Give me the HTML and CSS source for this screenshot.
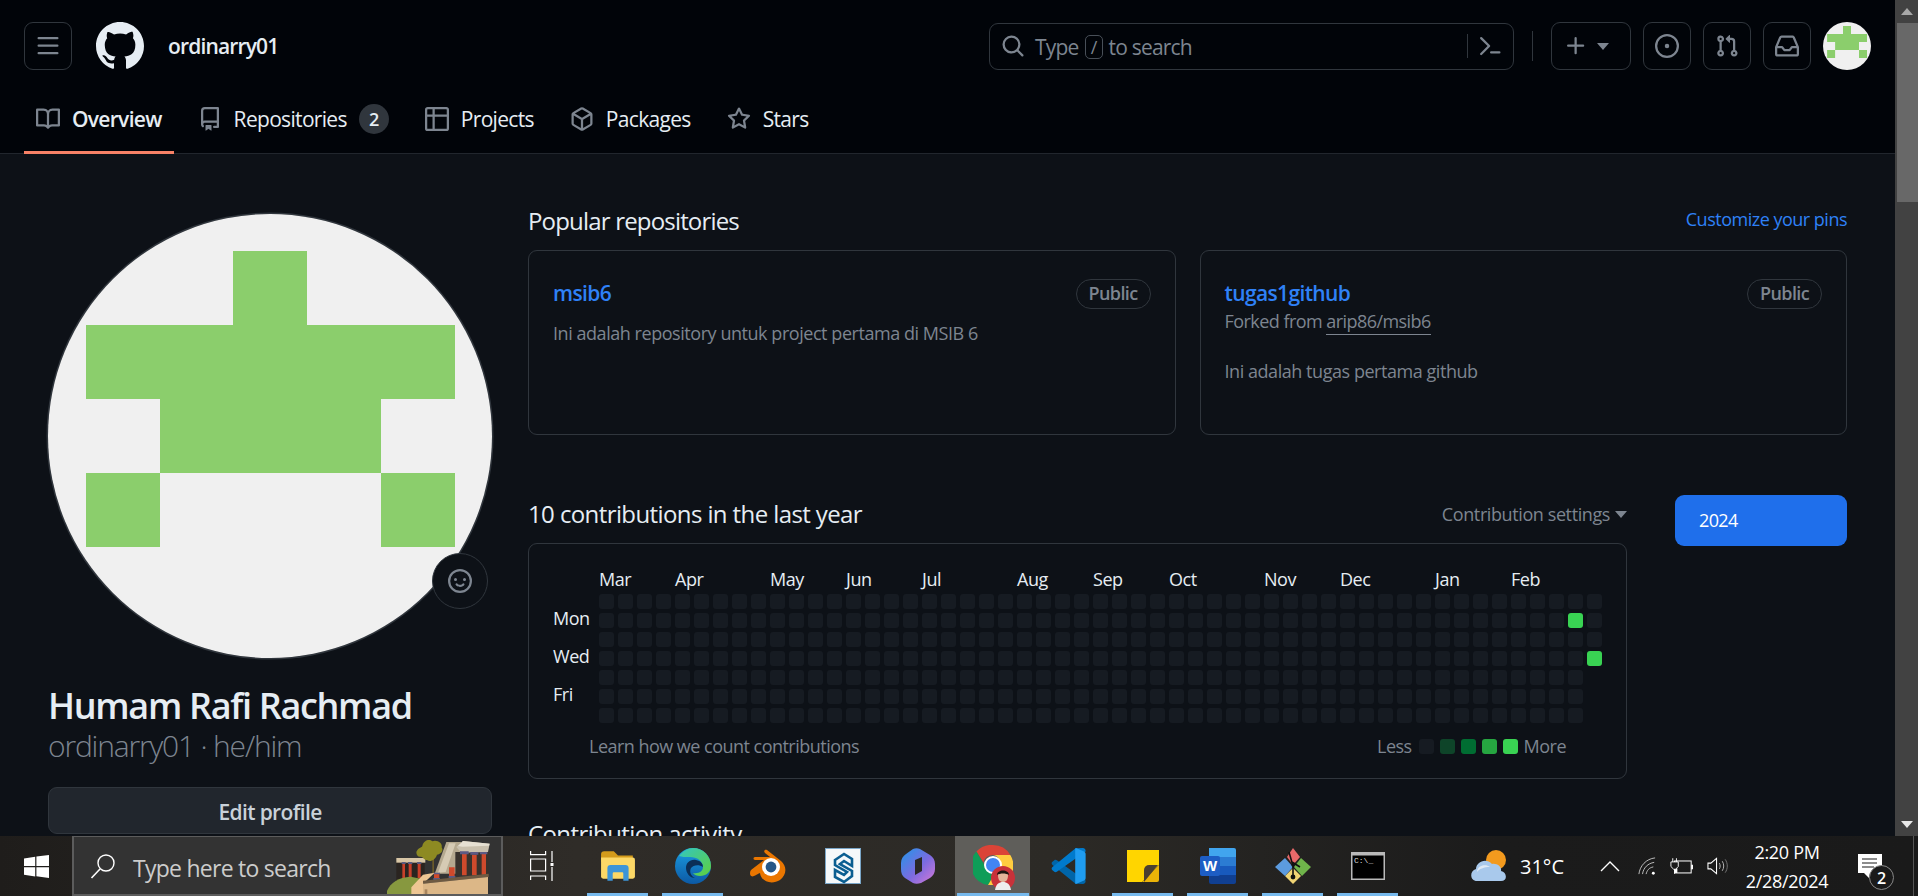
FILE: index.html
```html
<!DOCTYPE html>
<html lang="en">
<head>
<meta charset="utf-8">
<title>ordinarry01</title>
<link rel="stylesheet" href="styles.css">
</head>
<body>
<div class="window">
  <div class="page">
    <header class="site-header">
      <div class="topbar">
        <button class="icon-btn" aria-label="menu"><svg class="i24" viewBox="0 0 16 16"><path d="M1 2.75A.75.75 0 0 1 1.75 2h12.5a.75.75 0 0 1 0 1.5H1.75A.75.75 0 0 1 1 2.75Zm0 5A.75.75 0 0 1 1.75 7h12.5a.75.75 0 0 1 0 1.5H1.75A.75.75 0 0 1 1 7.75ZM1.75 12h12.5a.75.75 0 0 1 0 1.5H1.75a.75.75 0 0 1 0-1.5Z"/></svg></button>
        <svg class="logo" viewBox="0 0 16 16"><path d="M8 0c4.42 0 8 3.58 8 8a8.013 8.013 0 0 1-5.45 7.59c-.4.08-.55-.17-.55-.38 0-.27.01-1.13.01-2.2 0-.75-.25-1.23-.54-1.48 1.78-.2 3.65-.88 3.65-3.95 0-.88-.31-1.59-.82-2.15.08-.2.36-1.02-.08-2.12 0 0-.67-.22-2.2.82-.64-.18-1.32-.27-2-.27-.68 0-1.36.09-2 .27-1.53-1.03-2.2-.82-2.2-.82-.44 1.1-.16 1.92-.08 2.12-.51.56-.82 1.28-.82 2.15 0 3.06 1.86 3.75 3.64 3.95-.23.2-.44.55-.51 1.07-.46.21-1.61.55-2.33-.66-.15-.24-.6-.83-1.23-.82-.67.01-.27.38.01.53.34.19.73.9.82 1.13.16.45.68 1.31 2.69.94 0 .67.01 1.3.01 1.49 0 .21-.15.45-.55.38A7.995 7.995 0 0 1 0 8c0-4.42 3.58-8 8-8Z"/></svg>
        <span class="context">ordinarry01</span>
        <div class="search">
          <svg class="i24" viewBox="0 0 16 16"><path d="M10.68 11.74a6 6 0 0 1-7.922-8.982 6 6 0 0 1 8.982 7.922l3.04 3.04a.749.749 0 0 1-.326 1.275.749.749 0 0 1-.734-.215ZM11.5 7a4.499 4.499 0 1 0-8.997 0A4.499 4.499 0 0 0 11.5 7Z"/></svg>
          <span class="search-text">Type <kbd class="slash">/</kbd> to search</span>
          <span class="search-sep"></span>
          <svg class="i24" viewBox="0 0 16 16"><path d="m6.354 8.04-4.773 4.773a.75.75 0 1 0 1.061 1.06L7.945 8.57a.75.75 0 0 0 0-1.06L2.642 2.206a.75.75 0 0 0-1.06 1.061L6.353 8.04ZM8.75 11.5a.75.75 0 0 0 0 1.5h5.5a.75.75 0 0 0 0-1.5h-5.5Z"/></svg>
        </div>
        <span class="bar-sep"></span>
        <button class="icon-btn plus-btn" aria-label="create"><svg class="i24" viewBox="0 0 16 16"><path d="M7.75 2a.75.75 0 0 1 .75.75V7h4.25a.75.75 0 0 1 0 1.5H8.5v4.25a.75.75 0 0 1-1.5 0V8.5H2.75a.75.75 0 0 1 0-1.5H7V2.75A.75.75 0 0 1 7.75 2Z"/></svg><span class="caret"></span></button>
        <button class="icon-btn" aria-label="issues"><svg class="i24" viewBox="0 0 16 16"><path d="M8 9.5a1.5 1.5 0 1 0 0-3 1.5 1.5 0 0 0 0 3Z"/><path d="M8 0a8 8 0 1 1 0 16A8 8 0 0 1 8 0ZM1.5 8a6.5 6.5 0 1 0 13 0 6.5 6.5 0 0 0-13 0Z"/></svg></button>
        <button class="icon-btn" aria-label="pull requests"><svg class="i24" viewBox="0 0 16 16"><path d="M1.5 3.25a2.25 2.25 0 1 1 3 2.122v5.256a2.251 2.251 0 1 1-1.5 0V5.372A2.25 2.25 0 0 1 1.5 3.25Zm5.677-.177L9.573.677A.25.25 0 0 1 10 .854V2.5h1A2.5 2.5 0 0 1 13.5 5v5.628a2.251 2.251 0 1 1-1.5 0V5a1 1 0 0 0-1-1h-1v1.646a.25.25 0 0 1-.427.177L7.177 3.427a.25.25 0 0 1 0-.354ZM3.75 2.5a.75.75 0 1 0 0 1.5.75.75 0 0 0 0-1.5Zm0 9.5a.75.75 0 1 0 0 1.5.75.75 0 0 0 0-1.5Zm8.25.75a.75.75 0 1 0 1.5 0 .75.75 0 0 0-1.5 0Z"/></svg></button>
        <button class="icon-btn" aria-label="inbox"><svg class="i24" viewBox="0 0 16 16"><path d="M2.8 2.06A1.75 1.75 0 0 1 4.41 1h7.18c.7 0 1.333.417 1.61 1.06l2.74 6.395c.04.093.06.194.06.295v4.5A1.75 1.75 0 0 1 14.25 15H1.75A1.75 1.75 0 0 1 0 13.25v-4.5c0-.101.02-.202.06-.295Zm1.61.44a.25.25 0 0 0-.23.152L1.887 8H4.75a.75.75 0 0 1 .6.3L6.625 10h2.75l1.275-1.7a.75.75 0 0 1 .6-.3h2.863L11.82 2.652a.25.25 0 0 0-.23-.152Zm10.09 7h-2.875l-1.275 1.7a.75.75 0 0 1-.6.3h-3.5a.75.75 0 0 1-.6-.3L4.375 9.5H1.5v3.75c0 .138.112.25.25.25h12.5a.25.25 0 0 0 .25-.25Z"/></svg></button>
        <svg class="identicon small" viewBox="0 0 444 444"><rect width="444" height="444" fill="#f0f0f0"/><path fill="#8bce6c" d="M185 37h74v74h148v74h-74v74h74v74h-74v-74H112v74H38v-74h74v-74H38v-74h147z"/></svg>
      </div>
      <nav class="tabs">
        <a class="tab active"><svg class="i24" viewBox="0 0 16 16"><path d="M0 1.75A.75.75 0 0 1 .75 1h4.253c1.227 0 2.317.59 3 1.501A3.743 3.743 0 0 1 11.006 1h4.245a.75.75 0 0 1 .75.75v10.5a.75.75 0 0 1-.75.75h-4.507a2.25 2.25 0 0 0-1.591.659l-.622.621a.75.75 0 0 1-1.06 0l-.622-.621A2.25 2.25 0 0 0 5.258 13H.75a.75.75 0 0 1-.75-.75Zm7.251 10.324.004-5.073-.002-2.253A2.25 2.25 0 0 0 5.003 2.5H1.5v9h3.757a3.75 3.75 0 0 1 1.994.574ZM8.755 4.75l-.004 7.322a3.752 3.752 0 0 1 1.992-.572H14.5v-9h-3.495a2.25 2.25 0 0 0-2.25 2.25Z"/></svg>Overview</a>
        <a class="tab"><svg class="i24" viewBox="0 0 16 16"><path d="M2 2.5A2.5 2.5 0 0 1 4.5 0h8.75a.75.75 0 0 1 .75.75v12.5a.75.75 0 0 1-.75.75h-2.5a.75.75 0 0 1 0-1.5h1.75v-2h-8a1 1 0 0 0-.714 1.7.75.75 0 1 1-1.072 1.05A2.495 2.495 0 0 1 2 11.5Zm10.5-1h-8a1 1 0 0 0-1 1v6.708A2.486 2.486 0 0 1 4.5 9h8ZM5 12.25a.25.25 0 0 1 .25-.25h3.5a.25.25 0 0 1 .25.25v3.25a.25.25 0 0 1-.4.2l-1.45-1.087a.249.249 0 0 0-.3 0L5.4 15.7a.25.25 0 0 1-.4-.2Z"/></svg>Repositories<span class="counter">2</span></a>
        <a class="tab"><svg class="i24" viewBox="0 0 16 16"><path d="M0 1.75C0 .784.784 0 1.75 0h12.5C15.216 0 16 .784 16 1.75v12.5A1.75 1.75 0 0 1 14.25 16H1.75A1.75 1.75 0 0 1 0 14.25ZM6.5 6.5v8h7.75a.25.25 0 0 0 .25-.25V6.5Zm8-1.5V1.75a.25.25 0 0 0-.25-.25H6.5V5Zm-13 1.5v7.75c0 .138.112.25.25.25H5v-8ZM5 5V1.5H1.75a.25.25 0 0 0-.25.25V5Z"/></svg>Projects</a>
        <a class="tab"><svg class="i24" viewBox="0 0 16 16"><path d="m8.878.392 5.25 3.045c.54.314.872.89.872 1.514v6.098a1.75 1.75 0 0 1-.872 1.514l-5.25 3.045a1.75 1.75 0 0 1-1.756 0l-5.25-3.045A1.75 1.75 0 0 1 1 11.049V4.951c0-.624.332-1.201.872-1.514L7.122.392a1.75 1.75 0 0 1 1.756 0ZM7.875 1.69l-4.63 2.685L8 7.133l4.755-2.758-4.63-2.685a.248.248 0 0 0-.25 0ZM2.5 5.677v5.372c0 .09.047.171.125.216l4.625 2.683V8.432Zm6.25 8.271 4.625-2.683a.25.25 0 0 0 .125-.216V5.677L8.75 8.432Z"/></svg>Packages</a>
        <a class="tab"><svg class="i24" viewBox="0 0 16 16"><path d="M8 .25a.75.75 0 0 1 .673.418l1.882 3.815 4.21.612a.75.75 0 0 1 .416 1.279l-3.046 2.97.719 4.192a.751.751 0 0 1-1.088.791L8 12.347l-3.766 1.98a.75.75 0 0 1-1.088-.79l.72-4.194L.818 6.374a.75.75 0 0 1 .416-1.28l4.21-.611L7.327.668A.75.75 0 0 1 8 .25Zm0 2.445L6.615 5.5a.75.75 0 0 1-.564.41l-3.097.45 2.24 2.184a.75.75 0 0 1 .216.664l-.528 3.084 2.769-1.456a.75.75 0 0 1 .698 0l2.77 1.456-.53-3.084a.75.75 0 0 1 .216-.664l2.24-2.183-3.096-.45a.75.75 0 0 1-.564-.41L8 2.694Z"/></svg>Stars</a>
      </nav>
    </header>

    <main class="layout">
      <aside class="profile">
        <div class="avatar-wrap">
          <svg class="identicon" viewBox="0 0 444 444"><rect width="444" height="444" fill="#f0f0f0"/><path fill="#8bce6c" d="M185 37h74v74h148v74h-74v74h74v74h-74v-74H112v74H38v-74h74v-74H38v-74h147z"/></svg>
          <span class="status"><svg class="i24" viewBox="0 0 16 16"><path d="M8 0a8 8 0 1 1 0 16A8 8 0 0 1 8 0ZM1.5 8a6.5 6.5 0 1 0 13 0 6.5 6.5 0 0 0-13 0Zm3.82 1.636a.75.75 0 0 1 1.038.175l.007.009c.103.118.22.222.35.31.264.178.683.37 1.285.37.602 0 1.02-.192 1.285-.371.13-.088.247-.192.35-.31l.007-.008a.75.75 0 0 1 1.222.87l-.022-.015c.02.013.021.015.021.015v.001l-.001.002-.002.003-.005.007-.014.019a2.066 2.066 0 0 1-.184.213c-.16.166-.338.316-.53.445-.63.418-1.37.638-2.127.629-.946 0-1.652-.308-2.126-.63a3.331 3.331 0 0 1-.715-.657l-.014-.02-.005-.006-.002-.003v-.002h-.001l.613-.432-.614.43a.75.75 0 0 1 .183-1.044ZM12 7a1 1 0 1 1-2 0 1 1 0 0 1 2 0ZM5 8a1 1 0 1 1 0-2 1 1 0 0 1 0 2Z"/></svg></span>
        </div>
        <h1 class="name">Humam Rafi Rachmad</h1>
        <p class="login">ordinarry01 · he/him</p>
        <button class="edit">Edit profile</button>
      </aside>

      <section class="content">
        <div class="row-head">
          <h2 class="title popular">Popular repositories</h2>
          <a class="link">Customize your pins</a>
        </div>
        <div class="pins">
          <article class="pin">
            <div class="pin-head"><a class="repo">msib6</a><span class="label">Public</span></div>
            <p class="desc first">Ini adalah repository untuk project pertama di MSIB 6</p>
          </article>
          <article class="pin">
            <div class="pin-head"><div><a class="repo">tugas1github</a><p class="fork">Forked from <a class="fork-link">arip86/msib6</a></p></div><span class="label">Public</span></div>
            <p class="desc second">Ini adalah tugas pertama github</p>
          </article>
        </div>

        <div class="contrib">
          <div class="contrib-main">
            <div class="row-head contrib-head">
              <h2 class="title">10 contributions in the last year</h2>
              <span class="settings">Contribution settings<span class="caret small"></span></span>
            </div>
            <div class="calendar">
              <div class="months">
                <span class="m0">Mar</span><span class="m4">Apr</span><span class="m9">May</span><span class="m13">Jun</span><span class="m17">Jul</span><span class="m22">Aug</span><span class="m26">Sep</span><span class="m30">Oct</span><span class="m35">Nov</span><span class="m39">Dec</span><span class="m44">Jan</span><span class="m48">Feb</span>
              </div>
              <div class="graph">
                <div class="days"><span></span><span>Mon</span><span></span><span>Wed</span><span></span><span>Fri</span><span></span></div>
                <div class="weeks">
                  <div class="week"><i></i><i></i><i></i><i></i><i></i><i></i><i></i></div>
                  <div class="week"><i></i><i></i><i></i><i></i><i></i><i></i><i></i></div>
                  <div class="week"><i></i><i></i><i></i><i></i><i></i><i></i><i></i></div>
                  <div class="week"><i></i><i></i><i></i><i></i><i></i><i></i><i></i></div>
                  <div class="week"><i></i><i></i><i></i><i></i><i></i><i></i><i></i></div>
                  <div class="week"><i></i><i></i><i></i><i></i><i></i><i></i><i></i></div>
                  <div class="week"><i></i><i></i><i></i><i></i><i></i><i></i><i></i></div>
                  <div class="week"><i></i><i></i><i></i><i></i><i></i><i></i><i></i></div>
                  <div class="week"><i></i><i></i><i></i><i></i><i></i><i></i><i></i></div>
                  <div class="week"><i></i><i></i><i></i><i></i><i></i><i></i><i></i></div>
                  <div class="week"><i></i><i></i><i></i><i></i><i></i><i></i><i></i></div>
                  <div class="week"><i></i><i></i><i></i><i></i><i></i><i></i><i></i></div>
                  <div class="week"><i></i><i></i><i></i><i></i><i></i><i></i><i></i></div>
                  <div class="week"><i></i><i></i><i></i><i></i><i></i><i></i><i></i></div>
                  <div class="week"><i></i><i></i><i></i><i></i><i></i><i></i><i></i></div>
                  <div class="week"><i></i><i></i><i></i><i></i><i></i><i></i><i></i></div>
                  <div class="week"><i></i><i></i><i></i><i></i><i></i><i></i><i></i></div>
                  <div class="week"><i></i><i></i><i></i><i></i><i></i><i></i><i></i></div>
                  <div class="week"><i></i><i></i><i></i><i></i><i></i><i></i><i></i></div>
                  <div class="week"><i></i><i></i><i></i><i></i><i></i><i></i><i></i></div>
                  <div class="week"><i></i><i></i><i></i><i></i><i></i><i></i><i></i></div>
                  <div class="week"><i></i><i></i><i></i><i></i><i></i><i></i><i></i></div>
                  <div class="week"><i></i><i></i><i></i><i></i><i></i><i></i><i></i></div>
                  <div class="week"><i></i><i></i><i></i><i></i><i></i><i></i><i></i></div>
                  <div class="week"><i></i><i></i><i></i><i></i><i></i><i></i><i></i></div>
                  <div class="week"><i></i><i></i><i></i><i></i><i></i><i></i><i></i></div>
                  <div class="week"><i></i><i></i><i></i><i></i><i></i><i></i><i></i></div>
                  <div class="week"><i></i><i></i><i></i><i></i><i></i><i></i><i></i></div>
                  <div class="week"><i></i><i></i><i></i><i></i><i></i><i></i><i></i></div>
                  <div class="week"><i></i><i></i><i></i><i></i><i></i><i></i><i></i></div>
                  <div class="week"><i></i><i></i><i></i><i></i><i></i><i></i><i></i></div>
                  <div class="week"><i></i><i></i><i></i><i></i><i></i><i></i><i></i></div>
                  <div class="week"><i></i><i></i><i></i><i></i><i></i><i></i><i></i></div>
                  <div class="week"><i></i><i></i><i></i><i></i><i></i><i></i><i></i></div>
                  <div class="week"><i></i><i></i><i></i><i></i><i></i><i></i><i></i></div>
                  <div class="week"><i></i><i></i><i></i><i></i><i></i><i></i><i></i></div>
                  <div class="week"><i></i><i></i><i></i><i></i><i></i><i></i><i></i></div>
                  <div class="week"><i></i><i></i><i></i><i></i><i></i><i></i><i></i></div>
                  <div class="week"><i></i><i></i><i></i><i></i><i></i><i></i><i></i></div>
                  <div class="week"><i></i><i></i><i></i><i></i><i></i><i></i><i></i></div>
                  <div class="week"><i></i><i></i><i></i><i></i><i></i><i></i><i></i></div>
                  <div class="week"><i></i><i></i><i></i><i></i><i></i><i></i><i></i></div>
                  <div class="week"><i></i><i></i><i></i><i></i><i></i><i></i><i></i></div>
                  <div class="week"><i></i><i></i><i></i><i></i><i></i><i></i><i></i></div>
                  <div class="week"><i></i><i></i><i></i><i></i><i></i><i></i><i></i></div>
                  <div class="week"><i></i><i></i><i></i><i></i><i></i><i></i><i></i></div>
                  <div class="week"><i></i><i></i><i></i><i></i><i></i><i></i><i></i></div>
                  <div class="week"><i></i><i></i><i></i><i></i><i></i><i></i><i></i></div>
                  <div class="week"><i></i><i></i><i></i><i></i><i></i><i></i><i></i></div>
                  <div class="week"><i></i><i></i><i></i><i></i><i></i><i></i><i></i></div>
                  <div class="week"><i></i><i></i><i></i><i></i><i></i><i></i><i></i></div>
                  <div class="week"><i></i><i class="l4"></i><i></i><i></i><i></i><i></i><i></i></div>
                  <div class="week"><i></i><i></i><i></i><i class="l4"></i></div>
                </div>
              </div>
              <div class="cal-foot">
                <span>Learn how we count contributions</span>
                <span class="legend">Less<i></i><i class="l1"></i><i class="l2"></i><i class="l3"></i><i class="l4"></i>More</span>
              </div>
            </div>
          </div>
          <div class="years"><a class="year">2024</a></div>
        </div>
        <h2 class="title activity">Contribution activity</h2>
      </section>
    </main>
  </div>
  <div class="scrollbar">
    <span class="sb-btn"><span class="sb-up"></span></span>
    <span class="sb-thumb"></span>
    <span class="sb-btn sb-end"><span class="sb-down"></span></span>
  </div>
</div>

<footer class="taskbar">
  <div class="start"><svg class="win" viewBox="0 0 25 23"><path fill="#fff" d="M0 3.4 11.2 1.8V11H0zM12.4 1.6 25 0v11H12.4zM0 12.2h11.2v9.2L0 19.8zM12.4 12.2H25V23l-12.6-1.8z"/></svg></div>
  <div class="tb-search">
    <svg class="tb-lens" viewBox="0 0 26 26"><circle cx="16" cy="10" r="8" fill="none" stroke="#fff" stroke-width="1.4"/><path d="M10 16 1.5 25" stroke="#fff" stroke-width="1.6"/></svg>
    <span class="tb-search-text">Type here to search</span>
    <svg class="knossos" viewBox="27 12 342 180">
      <rect x="55" y="88" width="85" height="104" fill="#2a2420"/>
      <path fill="#d8c6a6" d="M55 78h87v14H55z"/>
      <path fill="#c8402a" d="M73 95h8v43h-8zM92 95h9v43h-9zM119 95h9v43h-9z"/>
      <path fill="#5b5a7e" d="M71 90h12v6H71zM90 90h13v6H90zM117 90h13v6h-13z"/>
      <path fill="#87983f" d="M22 192c6-32 32-56 76-58l30 6-20 52z"/>
      <path fill="#6a5a2a" d="M163 70h5v55h-5z"/>
      <path fill="#8d8a22" d="M115 60c6-14 16-12 18-18 4-18 22-22 30-14 14-6 32 6 28 18 8 12-6 22-14 22-4 14-20 24-30 16-10 0-12-10-18-10-8 2-14-4-14-14z"/>
      <path fill="#b5a98f" d="M170 125 205 30h44l-4 95z"/>
      <path fill="#d6cbb4" d="M180 122 213 34h20l-30 86z"/>
      <path fill="#38322c" d="M232 60h100v70H232z"/>
      <path fill="#c9c0ad" d="M235 45 255 27l80 8-5 25-80 2z"/>
      <path fill="#e6e0d2" d="M240 42 255 27l80 8-2 6-80 3z"/>
      <path fill="#cf4a2c" d="M252 66h14v64h-14zM282 68h14v62h-14zM311 66h13v62h-13zM168 126h16v18h-16zM213 106h17v32h-17z"/>
      <path fill="#5c5a84" d="M246 58h26v9h-26zM277 60h24v8h-24zM306 60h22v7h-22zM166 122h20v5h-20zM166 138h20v6h-20zM212 132h20v6h-20z"/>
      <path fill="#eec693" d="M100 192v-26l35-38 35-6-35 33v37z"/>
      <path fill="#6e5a42" d="M135 146 332 125v10L135 155z"/>
      <path fill="#dcb787" d="M135 155 330 135v57H135z"/>
      <path fill="#a8845c" d="M140 172h8v20h-8z"/>
    </svg>
  </div>
  <div class="slot taskview"><svg class="tv" viewBox="0 0 24 30"><path fill="none" stroke="#fff" stroke-width="1.2" d="M.6 0v3.6h15V0M.6 8h15v12H.6zM.6 29v-4h15v4"/><path fill="#fff" d="M21.4 0h1.2v11h-1.2zM20.5 12h3v3h-3zM21.4 16h1.2v14h-1.2z"/></svg></div>
  <div class="slot open"><svg class="t-ico" viewBox="0 0 34 28"><path fill="#d49b1b" d="M1 3a3 3 0 0 1 3-3h9l4 4h14v6H1z"/><path fill="#fcd867" d="M1 6h30a2 2 0 0 1 2 2v16a2 2 0 0 1-2 2H3a2 2 0 0 1-2-2z"/><path fill="#3d95d8" d="M7 28V16a3 3 0 0 1 3-3h14a3 3 0 0 1 3 3v12h-5v-7a1 1 0 0 0-1-1h-8a1 1 0 0 0-1 1v7z"/></svg></div>
  <div class="slot open"><svg class="t-ico" viewBox="0 0 36 36"><defs><linearGradient id="eb" x1="0" y1="0" x2="0" y2="1"><stop offset="0" stop-color="#1b9de2"/><stop offset="1" stop-color="#0c59a4"/></linearGradient><linearGradient id="eg" x1="0" y1="0" x2="1" y2="1"><stop offset="0" stop-color="#33c6c1"/><stop offset="1" stop-color="#5fd03e"/></linearGradient></defs><circle cx="18" cy="18" r="18" fill="url(#eb)"/><path fill="url(#eg)" d="M4 8C8 3 13 0 18 0c10 0 18 8 18 18 0 6-5 10-11 10-3 0-6-1-7-3 6 1 10-2 10-6 0-6-6-10-13-10-5 0-8 0-11-1z"/><path fill="#0b2e56" d="M11 20c0-5 4-9 10-8 5 1 7 4 7 7-4-3-10-2-12 1-2 4 0 8 4 10-5 0-9-5-9-10z"/></svg></div>
  <div class="slot"><svg class="t-ico" viewBox="0 0 36 34"><path fill="#ea7600" d="M1 21 14 11 5 11c-2 0-2-3 0-3h15L15 4c-2-2 0-4 2-3l14 11c6 5 6 14-1 19-8 5-19 2-20-7-1 0-5 3-6 3-4 2-5-3-3-6z"/><circle cx="21" cy="18" r="9" fill="#fff"/><circle cx="21" cy="18" r="5.4" fill="#265787"/></svg></div>
  <div class="slot"><svg class="t-ico" viewBox="0 0 36 36"><rect width="36" height="36" fill="#f5f8fa"/><rect x=".5" y=".5" width="35" height="35" fill="none" stroke="#7aa6c8"/><path fill="none" stroke="#0b5e91" stroke-width="2.6" d="M10 12l9-6 8 5v7l-8-5-4 3 12 7v5l-8 6-9-5v-7l9 5 3-3-12-7z"/></svg></div>
  <div class="slot"><svg class="t-ico" viewBox="0 0 34 36"><defs><linearGradient id="cp" x1="0" y1="0" x2="1" y2="1"><stop offset="0" stop-color="#2196e8"/><stop offset=".55" stop-color="#7c6be0"/><stop offset="1" stop-color="#d77ad6"/></linearGradient></defs><path fill="url(#cp)" d="M12 1c2-1 5-1 7 0l10 6c3 2 5 5 5 9v5c0 4-2 7-5 9l-9 5c-3 1-6 1-8 0L4 30c-3-2-4-5-4-9v-6c0-4 2-7 5-9z"/><path fill="#2a2826" d="M14 12l7-3v14l-7 4z"/></svg></div>
  <div class="slot active"><span class="chrome"><svg class="chrome-ico" viewBox="0 0 40 40"><path fill="#db4437" d="M20 0a20 20 0 0 1 17.3 10H20a10 10 0 0 0-9.6 7.2L3.4 6.6A20 20 0 0 1 20 0z"/><path fill="#0f9d58" d="M3.4 6.6 13 23a8 8 0 0 0 9 6L15 40A20 20 0 0 1 3.4 6.6z"/><path fill="#ffcd40" d="M37.3 10A20 20 0 0 1 15 40l10-17a8 8 0 0 0-5-13z"/><circle cx="20" cy="20" r="8" fill="#4285f4" stroke="#fff" stroke-width="2"/></svg><svg class="chrome-face" viewBox="0 0 24 24"><circle cx="12" cy="12" r="12" fill="#c8323a"/><path fill="#e2b49a" d="M7 9c0-4 10-4 10 0 0 5-2 7-5 7s-5-2-5-7z"/><path fill="#1d1512" d="M6 9c0-6 12-6 12 0-3-2-9-2-12 0z"/><path fill="#eee" d="M4 24c1-6 4-8 8-8s7 2 8 8z"/></svg></span></div>
  <div class="slot"><svg class="t-ico" viewBox="0 0 100 100"><path fill="#0065a9" d="M71 99 7 47c-2-2-4-5-1-8l6-5c2-2 5-1 7 0L99 90v1c0 3-1 8-7 9z"/><path fill="#007acc" d="M71 1 7 53c-2 2-4 5-1 8l6 5c2 2 5 1 7 0L99 10V9c0-3-1-8-7-9z"/><path fill="#1f9cf0" d="M72 100c-2-1-2-2-2-5V5c0-3 0-4 2-5l21 9c4 2 6 4 6 8v66c0 4-2 6-6 8z"/></svg></div>
  <div class="slot open"><svg class="t-ico" viewBox="-2 -2 36 36"><path fill="#ffd500" d="M0 0h32v15L15 32H0z"/><path fill="#eab308" d="M32 15v15a2 2 0 0 1-2 2H15z"/><path fill="#4a4030" d="M17 32 31 15h-9a5 5 0 0 0-5 5z"/></svg></div>
  <div class="slot open"><svg class="t-ico" viewBox="0 0 36 36"><path fill="#41a5ee" d="M9 0h25a2 2 0 0 1 2 2v7H9z"/><path fill="#2b7cd3" d="M9 9h27v9H9z"/><path fill="#185abd" d="M9 18h27v9H9z"/><path fill="#103f91" d="M9 27h27v7a2 2 0 0 1-2 2H11a2 2 0 0 1-2-2z"/><rect y="8" width="20" height="20" rx="2" fill="#1d5dc4"/><text x="10" y="23" class="word-w">W</text></svg></div>
  <div class="slot open"><svg class="t-ico" viewBox="0 0 36 36"><path fill="#e8696a" d="M18 0 25 9 18 17 12 9z"/><path fill="#6fb44a" d="M26 10 36 19 27 28 19 19z"/><path fill="#f0d474" d="M18 20 26 28 18 36 10 28z"/><path fill="#5c9bdf" d="M10 10 18 19 10 28 0 19z"/><path fill="none" stroke="#111" stroke-width="1.6" d="M14 4 18 18 18 29M17 14l8 5"/><circle cx="18" cy="29" r="2.4" fill="#111"/><circle cx="18" cy="17" r="1.6" fill="#111"/></svg></div>
  <div class="slot open"><svg class="t-ico" viewBox="0 -4 34 36"><rect width="34" height="28" fill="#b9b9b9"/><rect x="1.5" y="3.5" width="31" height="23" fill="#000"/><text x="3" y="11" class="cmd-t">C:\_</text></svg></div>
  <div class="weather">
    <svg class="cloud" viewBox="0 0 37 32"><circle cx="26" cy="10" r="10" fill="#f39a1e"/><path fill="#a9c9ec" d="M7 31C0 31-1 21 6 19c0-7 10-12 16-5 5-1 10 3 9 7 6 1 7 10 0 10z"/><path fill="#dfeaf6" d="M7 22c0-6 8-9 13-5-6 0-11 2-13 5z"/></svg>
    <span>31°C</span>
  </div>
  <div class="tray">
    <svg class="tray-chev" viewBox="0 0 20 12"><path fill="none" stroke="#fff" stroke-width="1.4" d="M1 11 10 2l9 9"/></svg>
    <svg class="tray-wifi" viewBox="0 0 20 20"><path fill="none" stroke="#bbb" stroke-width="1.1" d="M1 19C2 10 9 2 19 1M5 19c1-7 6-12 13-13M9 19c1-4 3-7 8-8"/><circle cx="17" cy="18" r="1.6" fill="#fff"/></svg>
    <svg class="tray-batt" viewBox="0 0 25 20"><rect x="5" y="4" width="18" height="13" fill="none" stroke="#fff" stroke-width="1.1"/><path fill="#fff" d="M23 8h2v5h-2z"/><path fill="#fff" d="M5 12h3v5H5z"/><path fill="#1a1a1a" stroke="#fff" stroke-width="1" d="M1 5h8v5l-3 3H4l-3-3z"/><path stroke="#fff" d="M3 1v4M7 1v4M5 13v5"/></svg>
    <svg class="tray-vol" viewBox="0 0 22 20"><path fill="none" stroke="#fff" stroke-width="1.1" d="M1 7h3l6-5v16l-6-5H1z"/><path fill="none" stroke="#bbb" stroke-width="1" d="M13 7c1 2 1 4 0 6M16 5c2 3 2 7 0 10"/><path fill="none" stroke="#777" stroke-width="1" d="M19 3c3 4 3 10 0 14"/></svg>
  </div>
  <div class="clock"><span>2:20 PM</span><span>2/28/2024</span></div>
  <div class="notify">
    <svg class="note" viewBox="0 0 24 24"><path fill="#fff" d="M0 0h24v19H12l-1 5-5-5H0z"/><path stroke="#1a1a1a" stroke-width="1.2" d="M4 5h15M4 9h15M4 13h12"/></svg>
    <span class="note-badge">2</span>
  </div>
  <span class="show-desktop"></span>
</footer>
</body>
</html>
```

FILE: styles.css
```css
* { box-sizing: border-box; }
html, body { margin: 0; height: 100%; overflow: hidden; }
body {
  display: flex;
  flex-direction: column;
  height: 896px;
  font-family: "Open Sans", "Noto Sans", sans-serif;
  color: #e6edf3;
  background: #0d1117;
  font-size: 21px;
  letter-spacing: -0.63px;
}
h1, h2, p { margin: 0; }
button { font: inherit; letter-spacing: inherit; color: inherit; background: none; cursor: pointer; }

.window { display: flex; height: 836px; overflow: hidden; }
.page { flex: 1; min-width: 0; overflow: hidden; background: #0d1117; }

/* header */
.site-header { height: 154px; background: #010409; border-bottom: 1px solid #21262d; padding-top: 22px; }
.topbar { display: flex; align-items: center; height: 48px; padding: 0 24px; gap: 12px; }
.i24 { width: 24px; height: 24px; fill: #7d8590; flex: none; display: block; }
.icon-btn { width: 48px; height: 48px; border: 1px solid #30363d; border-radius: 9px; display: flex; align-items: center; justify-content: center; padding: 0; flex: none; }
.logo { width: 48px; height: 48px; fill: #e6edf3; margin-left: 12px; flex: none; }
.context { font-weight: 600; margin-left: 12px; color: #e6edf3; letter-spacing: -0.85px; }
.search { margin-left: auto; width: 525px; height: 47px; border: 1px solid #30363d; border-radius: 9px; display: flex; align-items: center; padding: 0 11px; }
.search-text { color: #7d8590; margin-left: 10px; flex: 1; display: flex; align-items: center; gap: 6px; white-space: nowrap; letter-spacing: -0.8px; padding-top: 2px; }
.slash { font: inherit; font-size: 18px; width: 18px; height: 24px; border: 1px solid #484f58; border-radius: 5px; display: flex; align-items: center; justify-content: center; color: #7d8590; }
.search-sep { width: 1px; height: 24px; background: #30363d; margin-right: 10px; }
.bar-sep { width: 1px; height: 30px; background: #30363d; margin: 0 6px; }
.plus-btn { width: 80px; gap: 9px; justify-content: flex-start; padding-left: 12px; }
.caret { width: 0; height: 0; border-left: 6px solid transparent; border-right: 6px solid transparent; border-top: 7px solid #7d8590; }
.caret.small { margin-left: 5px; }
.identicon { width: 444px; height: 444px; border-radius: 50%; display: block; }
.identicon.small { width: 48px; height: 48px; flex: none; }
.tabs { display: flex; gap: 12px; padding: 15px 24px 0; }
.tab { position: relative; display: flex; align-items: center; height: 68px; padding: 0 12px; gap: 12px; color: #e6edf3; white-space: nowrap; letter-spacing: -0.68px; }
.tab.active { font-weight: 600; letter-spacing: -0.7px; }
.tab.active::after { content: ""; position: absolute; left: 0; right: 0; bottom: -1px; height: 3px; background: #f78166; }
.counter { width: 30px; height: 30px; border-radius: 50%; background: #30363d; font-size: 18px; font-weight: 600; display: flex; align-items: center; justify-content: center; }

/* layout */
.layout { display: flex; gap: 36px; padding: 49px 48px 0; }
.profile { width: 444px; flex: none; padding-top: 11px; }
.avatar-wrap { position: relative; width: 444px; height: 444px; }
.avatar-wrap .identicon { box-shadow: 0 0 0 1.5px #30363d; }
.status { position: absolute; left: 384px; top: 339px; width: 56px; height: 56px; border-radius: 50%; background: #0d1117; border: 1px solid #30363d; display: flex; align-items: center; justify-content: center; }
.name { font-size: 36px; line-height: 45px; font-weight: 600; margin-top: 25px; color: #e6edf3; white-space: nowrap; letter-spacing: -1.31px; }
.login { font-size: 30px; line-height: 36px; font-weight: 300; color: #7d8590; margin-top: 0; white-space: nowrap; letter-spacing: -1.18px; }
.edit { width: 444px; height: 47px; margin-top: 23px; background: #21262d; border: 1px solid #30363d; border-radius: 9px; color: #c9d1d9; font-weight: 600; font-size: 21px; display: block; padding: 2px 0 0; }

.content { flex: 1; min-width: 0; }
.row-head { display: flex; justify-content: space-between; align-items: center; height: 36px; }
.title { font-size: 24px; line-height: 36px; font-weight: 400; color: #e6edf3; white-space: nowrap; letter-spacing: -0.6px; }
.title.popular { letter-spacing: -0.82px; }
.link { font-size: 18px; color: #2f81f7; margin-top: -4px; letter-spacing: -0.5px; }
.pins { display: flex; gap: 24px; margin-top: 11px; }
.pin { flex: 1; height: 185px; border: 1px solid #30363d; border-radius: 9px; padding: 24px; }
.pin-head { display: flex; justify-content: space-between; align-items: flex-start; }
.repo { color: #2f81f7; font-weight: 600; font-size: 21px; line-height: 36px; display: block; height: 30px; }
.label { font-size: 18px; font-weight: 600; line-height: 27px; height: 30px; padding: 0 12px; margin-top: 4px; border: 1px solid #30363d; border-radius: 15px; color: #7d8590; }
.desc { font-size: 18px; color: #7d8590; line-height: 27px; letter-spacing: -0.45px; }
.desc.first { margin-top: 11px; }
.desc.second { margin-top: 23px; }
.fork { font-size: 18px; color: #7d8590; line-height: 27px; margin-top: 3px; letter-spacing: -0.55px; }
.fork-link { color: #7d8590; border-bottom: 1px solid #7d8590; padding-bottom: 1px; }

.contrib { display: flex; gap: 48px; margin-top: 60px; }
.contrib-main { flex: none; width: 1099px; }
.contrib-head { margin-top: 1px; }
.settings { font-size: 18px; color: #7d8590; display: flex; align-items: center; letter-spacing: -0.4px; }
.calendar { margin-top: 11px; height: 236px; border: 1px solid #30363d; border-radius: 9px; padding: 26px 0 0 24px; letter-spacing: -0.45px; }
.months { display: grid; grid-template-columns: repeat(53, 19px); margin-left: 46px; height: 18px; margin-bottom: 6px; font-size: 18px; line-height: 18px; }
.months span { grid-row: 1; white-space: nowrap; }
.m0 { grid-column: 1; } .m4 { grid-column: 5; } .m9 { grid-column: 10; } .m13 { grid-column: 14; }
.m17 { grid-column: 18; } .m22 { grid-column: 23; } .m26 { grid-column: 27; } .m30 { grid-column: 31; }
.m35 { grid-column: 36; } .m39 { grid-column: 40; } .m44 { grid-column: 45; } .m48 { grid-column: 49; }
.graph { display: flex; }
.days { width: 46px; display: grid; grid-template-rows: repeat(7, 15px); row-gap: 4px; font-size: 18px; line-height: 15px; margin-top: -2px; height: 127px; }
.weeks { display: flex; gap: 4px; }
.week { display: flex; flex-direction: column; gap: 4px; }
.week i, .legend i { display: block; width: 15px; height: 15px; border-radius: 3px; background: #161b22; }
.legend i { margin: 0 3px; }
.legend i:first-of-type { margin-left: 7px; }
.legend i:last-of-type { margin-right: 6px; }
.week i.l4, .legend i.l4 { background: #39d353; }
.legend i.l1 { background: #0e4429; }
.legend i.l2 { background: #006d32; }
.legend i.l3 { background: #26a641; }
.cal-foot { display: flex; justify-content: space-between; align-items: center; margin: 11px 60px 0 36px; height: 24px; font-size: 18px; color: #7d8590; letter-spacing: -0.52px; }
.legend { display: flex; align-items: center; }
.years { width: 172px; flex: none; }
.year { display: block; height: 51px; border-radius: 9px; background: #1f6feb; color: #fff; font-size: 18px; line-height: 51px; padding-left: 24px; }
.activity { margin-top: 37px; }

/* scrollbar */
.scrollbar { width: 23px; flex: none; background: #424242; display: flex; flex-direction: column; }
.sb-btn { height: 23px; display: flex; align-items: center; justify-content: center; flex: none; }
.sb-thumb { height: 179px; margin-left: 2px; background: #686868; flex: none; }
.sb-end { margin-top: auto; }
.sb-up { border-left: 6px solid transparent; border-right: 6px solid transparent; border-bottom: 7px solid #a8a8a8; }
.sb-down { border-left: 6px solid transparent; border-right: 6px solid transparent; border-top: 7px solid #e8e8e8; }

/* taskbar */
.taskbar { height: 60px; display: flex; align-items: center; color: #fff; background: linear-gradient(90deg, #1f1d1b 0, #2f2c28 30%, #2c2a26 55%, #1b1b1b 78%, #1a1a1a 100%); letter-spacing: 0; }
.start { width: 72px; flex: none; display: flex; justify-content: center; }
.win { width: 25px; height: 23px; display: block; }
.tb-search { width: 431px; height: 60px; flex: none; display: flex; align-items: center; background: #333; border: solid #5c5c5c; border-width: 1px 2px 2px 2px; overflow: hidden; padding-left: 16px; }
.tb-lens { width: 26px; height: 26px; flex: none; }
.tb-search-text { font-size: 23px; color: #ccc; margin-left: 17px; letter-spacing: -0.74px; white-space: nowrap; padding-top: 4px; }
.knossos { width: 114px; height: 60px; margin-left: auto; flex: none; }
.slot { width: 75px; height: 60px; flex: none; display: flex; align-items: center; justify-content: center; position: relative; }
.slot.open::after, .slot.active::after { content: ""; position: absolute; bottom: 0; height: 3px; background: #76b9ed; left: 7px; right: 7px; }
.slot.active { background: #5f5e5a; }
.slot.active::after { left: 2px; right: 1px; }
.taskview { width: 77px; }
.tv { width: 24px; height: 30px; }
.t-ico { width: 36px; height: 36px; display: block; }
.chrome { position: relative; display: block; width: 40px; height: 42px; }
.chrome-ico { width: 40px; height: 40px; display: block; }
.chrome-face { position: absolute; right: -2px; bottom: -3px; width: 24px; height: 24px; }
.word-w { font-family: "Liberation Sans", sans-serif; font-size: 15px; font-weight: 700; fill: #fff; text-anchor: middle; }
.cmd-t { font-family: "Liberation Mono", monospace; font-size: 8px; fill: #ddd; }
.weather { display: flex; align-items: center; gap: 13px; margin-left: 65px; font-size: 20px; width: 92px; flex: none; white-space: nowrap; }
.cloud { width: 37px; height: 32px; flex: none; }
.tray { display: flex; align-items: center; margin-left: 38px; gap: 14px; flex: none; }
.tray-chev { width: 20px; height: 12px; }
.tray-wifi { width: 18px; height: 18px; margin-left: 4px; }
.tray-batt { width: 23px; height: 19px; }
.tray-vol { width: 21px; height: 20px; }
.clock { width: 118px; flex: none; display: flex; flex-direction: column; align-items: center; gap: 8px; font-size: 18px; line-height: 21px; letter-spacing: -0.3px; padding-top: 1px; }
.notify { position: relative; width: 36px; height: 44px; margin-left: 10px; flex: none; }
.note { position: absolute; left: 2px; top: 10px; width: 24px; height: 24px; }
.note-badge { position: absolute; left: 13px; top: 21px; width: 25px; height: 25px; border-radius: 50%; border: 1.5px solid #888; background: #1a1a1a; display: flex; align-items: center; justify-content: center; font-size: 16px; font-weight: 600; }
.show-desktop { width: 1px; height: 60px; background: #555; margin-left: 21px; flex: none; }
```
